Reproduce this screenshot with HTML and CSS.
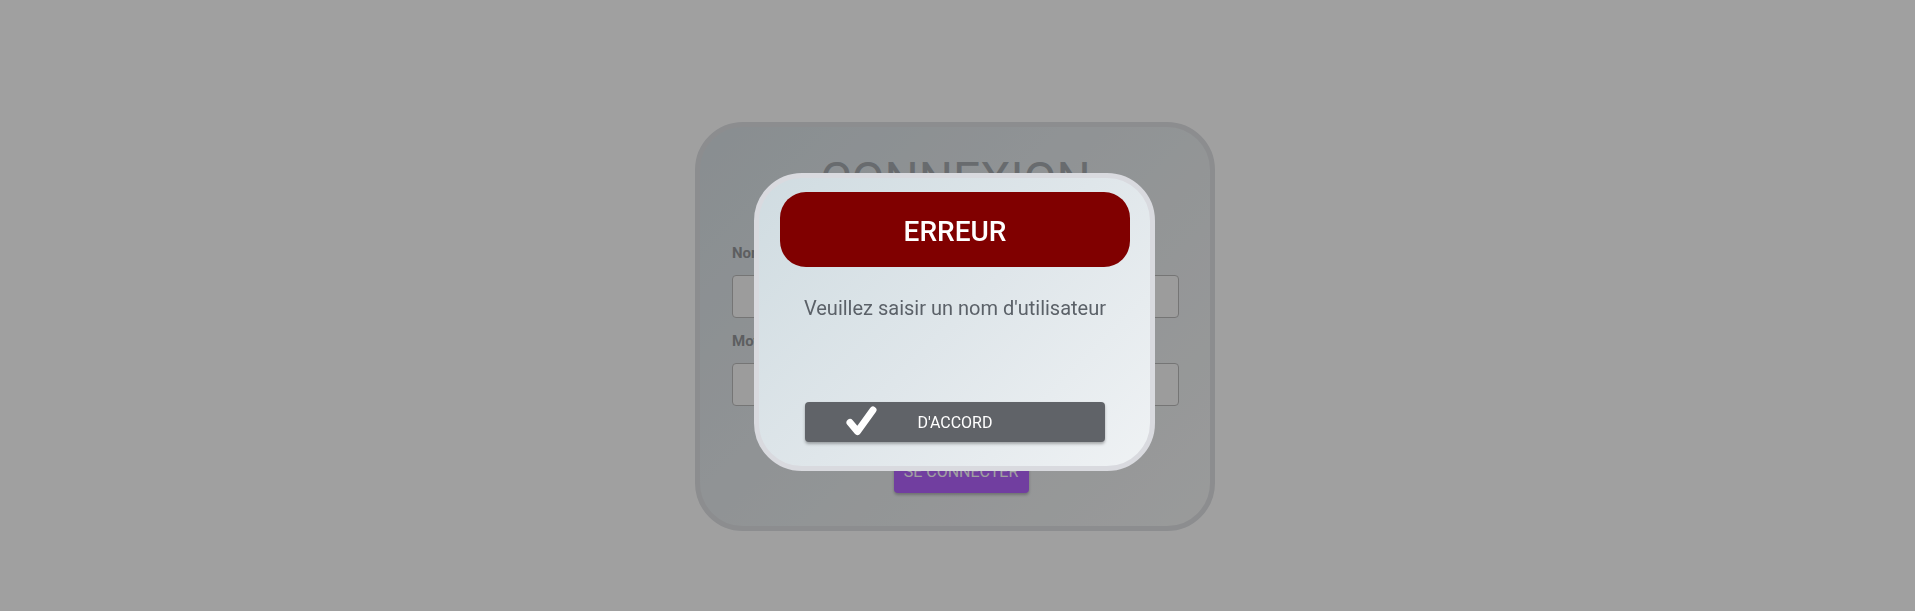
FILE: index.html
```html
<!DOCTYPE html>
<html lang="fr">
<head>
<meta charset="utf-8">
<title>Connexion</title>
<link rel="stylesheet" href="styles.css">
</head>
<body>
<main class="page">
  <form class="login-card">
    <h1 class="login-title">CONNEXION</h1>
    <label class="field-label" for="user">Nom d'utilisateur</label>
    <input class="field-input" id="user" type="text">
    <label class="field-label" for="pass">Mot de passe</label>
    <input class="field-input" id="pass" type="password">
    <div class="login-actions">
      <button class="login-button" type="button">SE CONNECTER</button>
    </div>
  </form>
</main>
<div class="backdrop"></div>
<div class="dialog" role="alertdialog">
  <div class="dialog-header">ERREUR</div>
  <p class="dialog-message">Veuillez saisir un nom d'utilisateur</p>
  <button class="dialog-button" type="button">
    <svg class="dialog-check" width="32" height="30" viewBox="0 0 32 30" aria-hidden="true">
      <polyline points="5,16.5 12.5,25.5 28,4" fill="none" stroke="#ffffff" stroke-width="7" stroke-linecap="round" stroke-linejoin="round"/>
    </svg>
    <span>D'ACCORD</span>
  </button>
</div>
</body>
</html>
```
FILE: styles.css
```css
html, body {
  margin: 0;
  padding: 0;
  background: #ffffff;
  font-family: Roboto, "Liberation Sans", Arial, sans-serif;
}

.page {
  display: flex;
  justify-content: center;
  padding: 122px 5px 0 0;
}

.login-card {
  box-sizing: border-box;
  width: 520px;
  height: 409px;
  border: 5px solid #dfe1e4;
  border-radius: 48px;
  background: linear-gradient(135deg, #dae2e7 0%, #f5f6f6 100%);
  padding: 25px 31px 0 32px;
  display: flex;
  flex-direction: column;
}

.login-title {
  margin: 0 0 36px;
  text-align: center;
  font-size: 48px;
  font-weight: 400;
  line-height: 56px;
  color: #a6abb0;
}

.field-label {
  display: block;
  font-size: 15px;
  font-weight: 700;
  line-height: 18px;
  color: #94979a;
  margin-bottom: 13px;
}

.field-input {
  box-sizing: border-box;
  width: 100%;
  height: 43px;
  border: 1px solid #bbbbbb;
  border-radius: 4px;
  background: #f9f9f9;
  margin: 0 0 14px;
}

.login-actions {
  display: flex;
  justify-content: center;
  margin-top: 30px;
  padding-left: 11px;
}

.login-button {
  width: 135px;
  height: 43px;
  border: none;
  border-radius: 4px;
  background: #b464ff;
  color: #ffffff;
  font-family: Roboto, "Liberation Sans", Arial, sans-serif;
  font-size: 16px;
  padding: 0;
  box-shadow: 0 2px 3px rgba(0, 0, 0, 0.25);
}

.backdrop {
  position: fixed;
  inset: 0;
  background: rgba(0, 0, 0, 0.373);
}

.dialog {
  position: fixed;
  left: 754px;
  top: 173px;
  box-sizing: border-box;
  width: 401px;
  height: 298px;
  border: 5px solid #d9dadf;
  border-radius: 48px;
  background: linear-gradient(135deg, #d0dce1 0%, #dfe6ea 50%, #eff2f4 100%);
  padding: 14px 20px 24px 21px;
  display: flex;
  flex-direction: column;
}

.dialog-header {
  height: 75px;
  border-radius: 26px;
  background: #800000;
  color: #ffffff;
  display: flex;
  align-items: center;
  justify-content: center;
  font-size: 28px;
  font-weight: 500;
  padding-top: 4px;
  box-sizing: border-box;
}

.dialog-message {
  margin: 29px 0 0;
  text-align: center;
  font-size: 20px;
  color: #5b6168;
}

.dialog-button {
  position: relative;
  margin: auto auto 0;
  width: 300px;
  height: 40px;
  border: none;
  border-radius: 4px;
  background: #606368;
  color: #ffffff;
  font-family: Roboto, "Liberation Sans", Arial, sans-serif;
  font-size: 16px;
  padding: 0;
  box-shadow: 0 2px 3px rgba(0, 0, 0, 0.3);
}

.dialog-check {
  position: absolute;
  left: 40px;
  top: 4px;
}
```
